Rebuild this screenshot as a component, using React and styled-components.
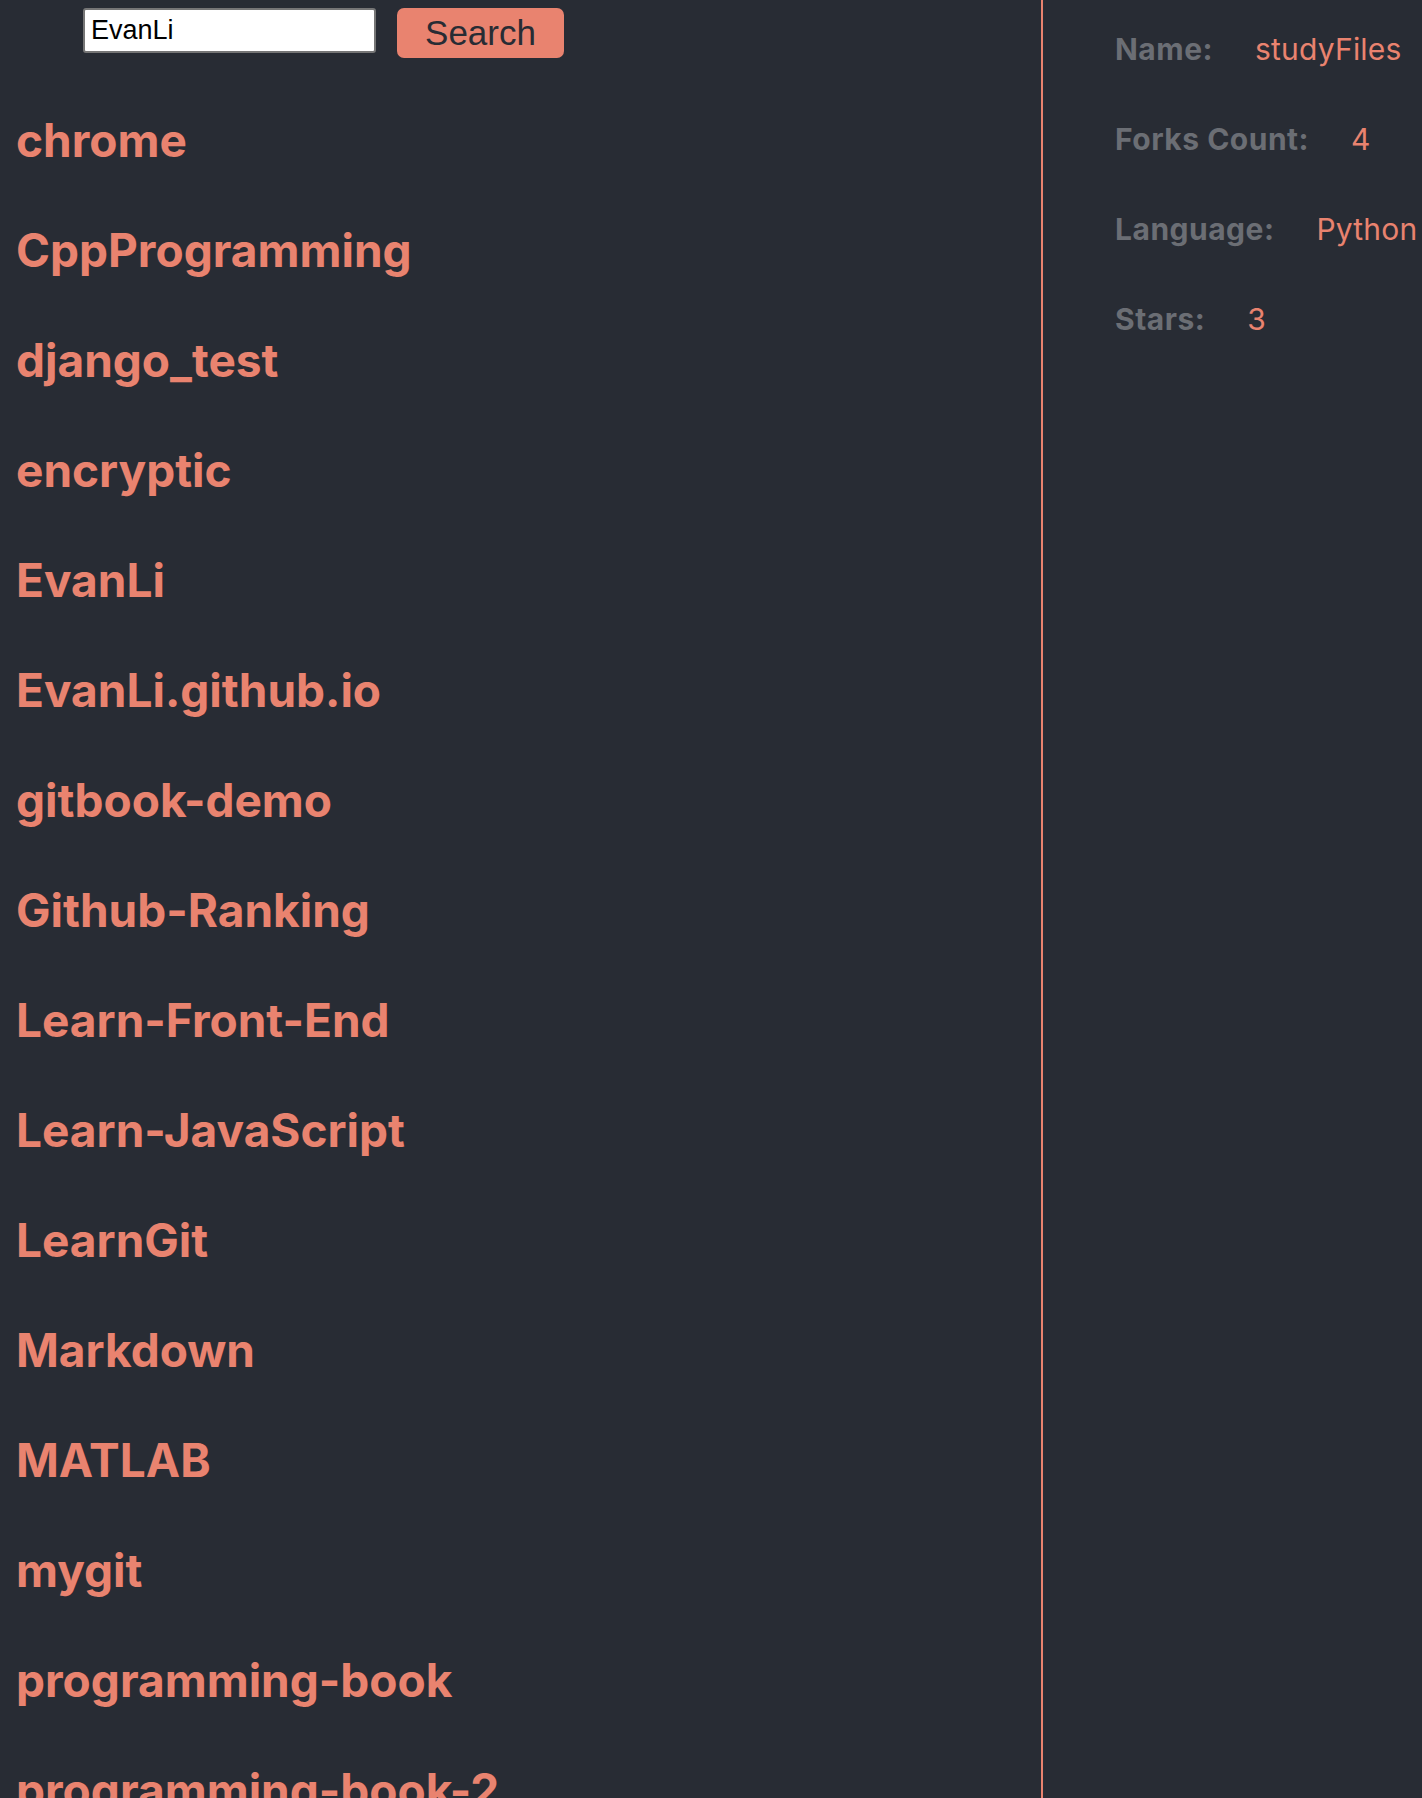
import React from 'react';
import styled, { createGlobalStyle } from 'styled-components';

const SALMON = '#e9836f';
const BG = '#282c34';

const GlobalStyle = createGlobalStyle`
  body {
    margin: 0;
    background: ${BG};
    font-family: Inter, "Noto Sans", sans-serif;
  }
`;

const Page = styled.div`
  display: flex;
  min-height: 100vh;
`;

const Main = styled.div`
  width: 1041px;
  flex-shrink: 0;
`;

const SearchBar = styled.form`
  display: flex;
  align-items: flex-start;
  gap: 21px;
  padding: 8px 0 0 83px;
`;

const SearchInput = styled.input`
  box-sizing: border-box;
  width: 293px;
  height: 45px;
  padding: 0 6px;
  border: 2px solid #767676;
  border-radius: 3px;
  background: #fff;
  color: #000;
  font: 27px "Liberation Sans", Arial, sans-serif;
  outline: none;
`;

const SearchButton = styled.button`
  box-sizing: border-box;
  width: 167px;
  height: 50px;
  padding: 0;
  border: none;
  border-radius: 7px;
  background: ${SALMON};
  color: ${BG};
  font: 35px "Liberation Sans", Arial, sans-serif;
  cursor: pointer;
`;

const RepoList = styled.ul`
  list-style: none;
  margin: 27px 0 0;
  padding: 0 0 0 16px;
`;

const RepoItem = styled.li`
  height: 110px;
  line-height: 110px;
  font-size: 46px;
  font-weight: 700;
  color: ${SALMON};
  white-space: nowrap;
`;

const Details = styled.aside`
  flex: 1;
  border-left: 2px solid ${SALMON};
  padding: 4px 0 0 72px;
  overflow: hidden;
`;

const DetailRow = styled.div`
  display: flex;
  line-height: 90px;
  font-size: 30px;
  white-space: nowrap;
`;

const Label = styled.span`
  font-weight: 700;
  letter-spacing: 0.5px;
  color: #6b6e74;
  margin-right: 42px;
`;

const Value = styled.span`
  color: ${SALMON};
  letter-spacing: 0.2px;
`;

const repos = [
  'chrome',
  'CppProgramming',
  'django_test',
  'encryptic',
  'EvanLi',
  'EvanLi.github.io',
  'gitbook-demo',
  'Github-Ranking',
  'Learn-Front-End',
  'Learn-JavaScript',
  'LearnGit',
  'Markdown',
  'MATLAB',
  'mygit',
  'programming-book',
  'programming-book-2',
];

const details = [
  ['Name:', 'studyFiles'],
  ['Forks Count:', '4'],
  ['Language:', 'Python'],
  ['Stars:', '3'],
];

const App = () => {
  return (
    <Page>
      <GlobalStyle />
      <Main>
        <SearchBar onSubmit={(e) => e.preventDefault()}>
          <SearchInput defaultValue='EvanLi' />
          <SearchButton type='submit'>Search</SearchButton>
        </SearchBar>
        <RepoList>
          {repos.map((name) => (
            <RepoItem key={name}>{name}</RepoItem>
          ))}
        </RepoList>
      </Main>
      <Details>
        {details.map(([label, value]) => (
          <DetailRow key={label}>
            <Label>{label}</Label>
            <Value>{value}</Value>
          </DetailRow>
        ))}
      </Details>
    </Page>
  );
};

export default App;
